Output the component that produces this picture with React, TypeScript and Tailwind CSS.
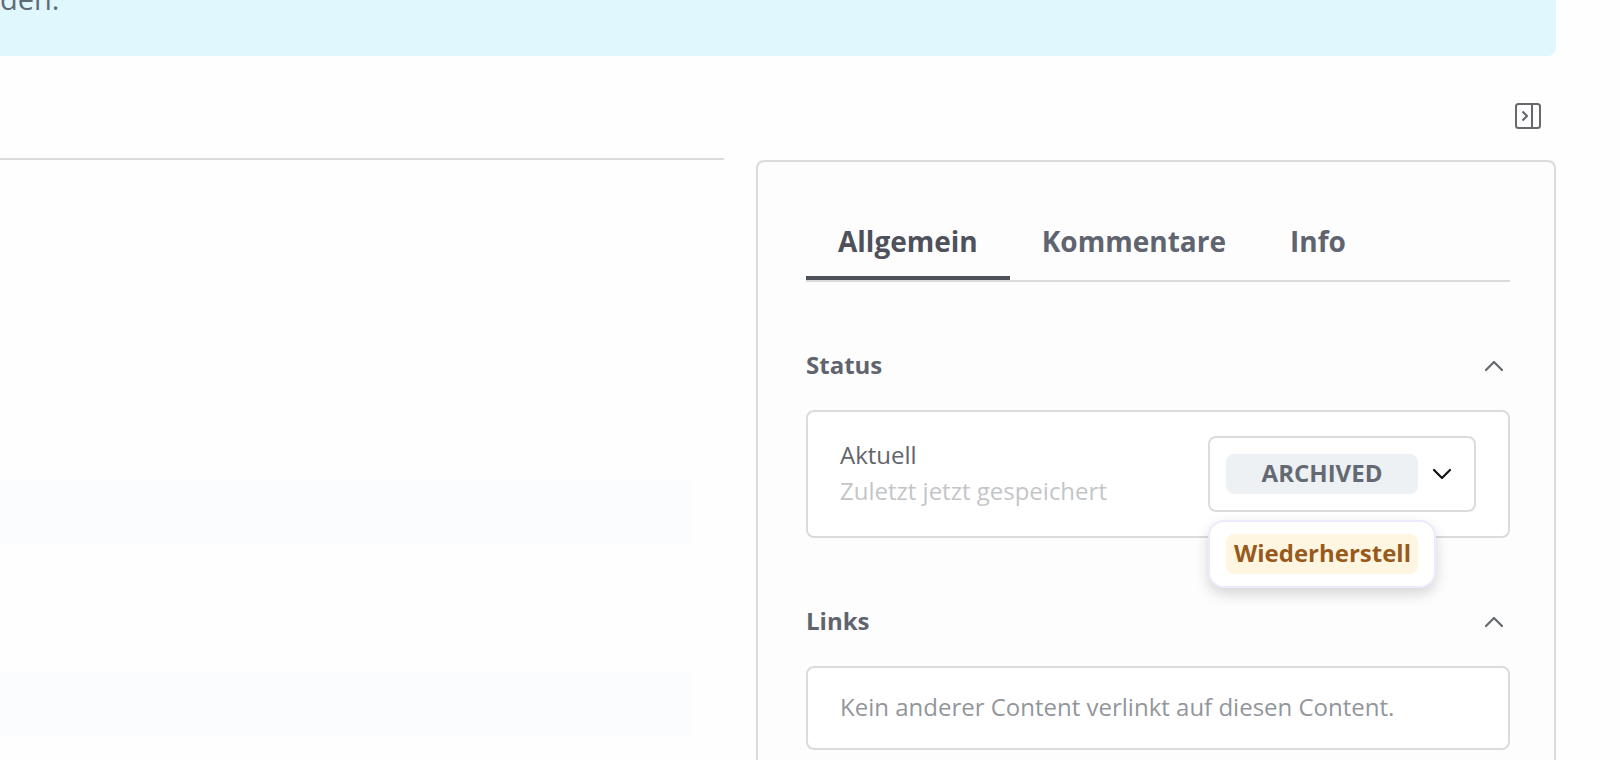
import { useState, type ReactNode } from "react";

const tabs = ["Allgemein", "Kommentare", "Info"];

function Chevron({ up = false, className = "" }: { up?: boolean; className?: string }) {
    return (
        <svg viewBox="0 0 32 32" className={"size-8 " + className} fill="none" stroke="currentColor" strokeWidth="2.2" strokeLinecap="round" strokeLinejoin="round" aria-hidden="true">
            <path d={up ? "M8 20 16 12 24 20" : "M8 12 16 20 24 12"} />
        </svg>
    );
}

function Section({ title, children }: { title: string; children: ReactNode }) {
    const [open, setOpen] = useState(true);

    return (
        <section className="mt-15">
            <h2>
                <button
                    type="button"
                    aria-expanded={open}
                    onClick={() => setOpen(!open)}
                    className="flex h-12 w-full items-center justify-between text-2xl font-bold text-[#5f646e]"
                >
                    <span className="pb-0.5">{title}</span>
                    <Chevron up={open} className="text-[#65686c]" />
                </button>
            </h2>
            {open && <div className="mt-5 rounded-lg border-2 border-[#dadbdd] bg-white px-8">{children}</div>}
        </section>
    );
}

function StatusSelect() {
    const [open, setOpen] = useState(true);

    return (
        <div className="relative">
            <button
                type="button"
                aria-haspopup="listbox"
                aria-expanded={open}
                onClick={() => setOpen(!open)}
                className="flex items-center gap-2 rounded-lg border-2 border-[#dadbdd] bg-white p-4"
            >
                <span className="h-10 w-48 rounded-lg bg-[#eef1f3] text-center text-2xl leading-[38px] font-bold text-[#646a73]">
                    ARCHIVED
                </span>
                <Chevron className="text-[#111111]" />
            </button>
            {open && (
                <ul
                    role="listbox"
                    aria-label="Status"
                    className="absolute top-full left-0 z-10 mt-2 rounded-2xl border-2 border-[#ebebfd] bg-white px-4 py-3 shadow-[0_6px_14px_rgba(0,0,0,0.16)]"
                >
                    <li role="option" aria-selected={false}>
                        <button
                            type="button"
                            className="block h-10 w-48 overflow-hidden rounded-lg bg-[#fff6e2] px-2 pb-0.5 text-left text-2xl leading-[38px] font-bold whitespace-nowrap text-[#985a1c]"
                        >
                            Wiederherstell
                        </button>
                    </li>
                </ul>
            )}
        </div>
    );
}

export default function App() {
    const [active, setActive] = useState("Allgemein");

    return (
        <div className="flex h-screen flex-col overflow-hidden bg-[#fefefe] pr-16 font-['Open_Sans',sans-serif]">
            <div className="flex h-14 shrink-0 items-end overflow-hidden rounded-br-lg bg-[#e0f7fe] pb-9">
                <p className="text-[29px] leading-[42px] text-[#5f6b76]">den.</p>
            </div>

            <div className="flex flex-1 gap-8">
                <main className="min-w-0 flex-1">
                    <div className="h-26 border-b-2 border-[#dadbdd]" />
                    <div className="space-y-[130px] pt-[321px] pr-8">
                        <div className="h-[62px] bg-[#fbfcfe]" />
                        <div className="h-[62px] bg-[#fbfcfe]" />
                    </div>
                </main>

                <aside className="flex w-[800px] flex-col">
                    <div className="flex justify-end pt-11 pr-3 pb-7">
                        <button type="button" aria-label="Seitenleiste ausblenden" className="text-[#65686c]">
                            <svg viewBox="0 0 32 32" className="size-8" fill="none" stroke="currentColor" strokeWidth="2" strokeLinejoin="round" aria-hidden="true">
                                <rect x="4" y="4" width="24" height="24" rx="2.5" />
                                <path d="M20 4v24" />
                                <path d="M10.5 11.5 15 16 10.5 20.5" strokeWidth="2.2" />
                            </svg>
                        </button>
                    </div>

                    <div className="flex-1 rounded-t-lg border-2 border-b-0 border-[#dadbdd] bg-[#fdfdfe] pt-11 pr-11 pl-12">
                        <div role="tablist" className="flex border-b-2 border-[#dadbdd]">
                            {tabs.map((tab) => (
                                <button
                                    key={tab}
                                    type="button"
                                    role="tab"
                                    aria-selected={tab === active}
                                    onClick={() => setActive(tab)}
                                    className={
                                        tab === active
                                            ? "h-[74px] border-b-4 border-[#4f515a] px-8 text-[28px] font-bold text-[#4f515a]"
                                            : "h-[74px] border-b-4 border-transparent px-8 text-[28px] font-bold text-[#5f646e]"
                                    }
                                >
                                    {tab}
                                </button>
                            ))}
                        </div>

                        <Section title="Status">
                            <div className="flex items-center justify-between py-6">
                                <div className="pb-0.5 text-2xl leading-9">
                                    <p className="text-[#62656d]">Aktuell</p>
                                    <p className="text-[#c3c6c8]">Zuletzt jetzt gespeichert</p>
                                </div>
                                <StatusSelect />
                            </div>
                        </Section>

                        <Section title="Links">
                            <p className="pt-6 pb-6.5 text-2xl leading-[30px] text-[#92969c]">
                                Kein anderer Content verlinkt auf diesen Content.
                            </p>
                        </Section>
                    </div>
                </aside>
            </div>
        </div>
    );
}
